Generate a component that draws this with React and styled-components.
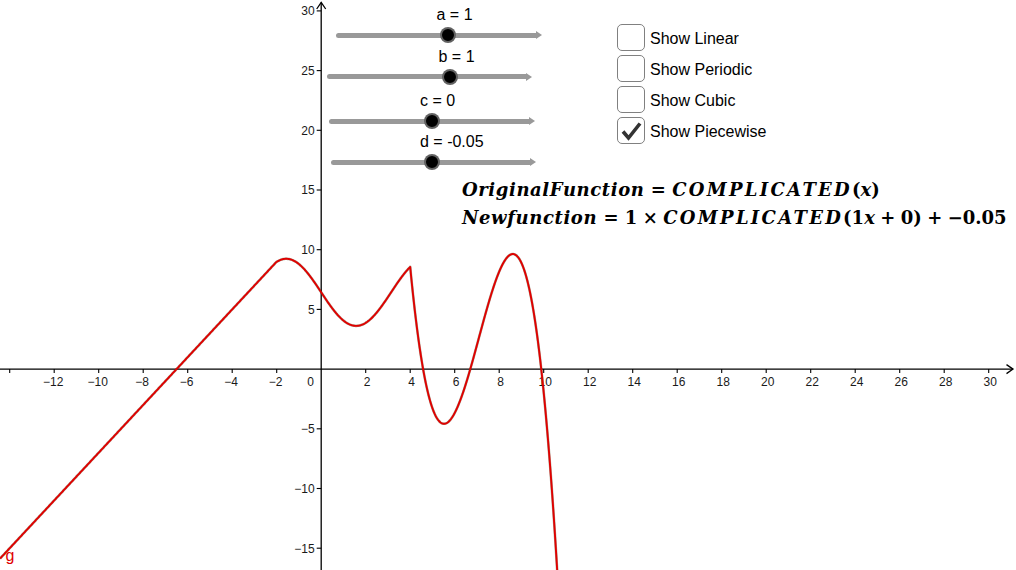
import React from 'react';
import styled, { createGlobalStyle } from 'styled-components';

const Global = createGlobalStyle`
  html, body { margin: 0; padding: 0; background: #fff; }
  body { font-family: "Liberation Sans", Arial, sans-serif; }
`;

const OX = 321.2;
const OY = 369.1;
const SX = 22.25;
const SY = 11.94;
const px = (X) => OX + X * SX;
const py = (Y) => OY - Y * SY;

const f = (X) => {
  if (X < -2) return 2 * X + 13;
  if (X < 4) return 6.43 - 2.81 * Math.sin(X);
  return -(X - 4.58) * (X - 6.7) * (X - 9.89) * (0.928 + 0.0109 * (X - 4));
};

const buildCurve = () => {
  const xs = [];
  for (let p = 0; p <= 1016; p += 0.5) xs.push((p - OX) / SX);
  xs.push(-2, 4 - 1e-6, 4);
  xs.sort((a, b) => a - b);
  const pts = [];
  for (const X of xs) {
    const Y = py(f(X));
    pts.push([px(X), Y]);
    if (Y > 640) break;
  }
  return 'M' + pts.map(([a, b]) => `${a.toFixed(2)} ${b.toFixed(2)}`).join(' L');
};

const curvePath = buildCurve();

const minus = (n) => (n < 0 ? '\u2212' + Math.abs(n) : String(n));

const xTicks = [];
for (let v = -14; v <= 30; v += 2) if (v !== 0) xTicks.push(v);
const yTicks = [];
for (let v = -15; v <= 30; v += 5) if (v !== 0) yTicks.push(v);

const Applet = styled.div`
  position: relative;
  width: 1016px;
  height: 570px;
  overflow: hidden;
  background: #fff;
`;

const Graph = styled.svg`
  display: block;
  width: 1016px;
  height: 570px;
`;

const AxisLabel = styled.text`
  font-family: "Liberation Sans", Arial, sans-serif;
  font-size: 12px;
  fill: #1a1a1a;
`;

const CurveLabel = styled.text`
  font-family: "Liberation Sans", Arial, sans-serif;
  font-size: 16px;
  fill: #e00000;
`;

/* ---------- sliders ---------- */
const SliderBox = styled.div`
  position: absolute;
  left: ${(p) => p.$left}px;
  top: ${(p) => p.$top}px;
  width: ${(p) => p.$width}px;
  display: flex;
  flex-direction: column;
`;

const SliderLabel = styled.div`
  font: 16px/18px "Liberation Sans", Arial, sans-serif;
  color: #000;
  white-space: nowrap;
  padding-left: ${(p) => p.$indent}px;
  margin-bottom: 8.5px;
`;

const Track = styled.div`
  position: relative;
  height: 5px;
  background: #999;
  border-radius: 2.5px;
  &::after {
    content: '';
    position: absolute;
    right: -4px;
    top: -1.5px;
    border-left: 6px solid #999;
    border-top: 4px solid transparent;
    border-bottom: 4px solid transparent;
  }
`;

const Knob = styled.span`
  position: absolute;
  left: ${(p) => p.$at - 8}px;
  top: -5.5px;
  width: 16px;
  height: 16px;
  box-sizing: border-box;
  border-radius: 50%;
  background: #000;
  border: 2.5px solid rgba(115, 115, 115, 0.85);
`;

const Slider = ({ name, value, left, width, y, knob }) => (
  <SliderBox $left={left} $top={y - 29} $width={width}>
    <SliderLabel $indent={knob - 11.5}>
      {name} = {value}
    </SliderLabel>
    <Track>
      <Knob $at={knob} />
    </Track>
  </SliderBox>
);

/* ---------- checkboxes ---------- */
const CheckList = styled.div`
  position: absolute;
  left: 617px;
  top: 24px;
  display: flex;
  flex-direction: column;
  gap: 4px;
`;

const CheckRow = styled.div`
  display: flex;
  align-items: center;
  gap: 5px;
  height: 27px;
  font: 16px/18px "Liberation Sans", Arial, sans-serif;
  color: #000;
  white-space: nowrap;
`;

const Box = styled.span`
  width: 28px;
  height: 27px;
  box-sizing: border-box;
  border: 1.5px solid #808080;
  border-radius: 5px;
  background: #fff;
  display: flex;
  align-items: center;
  justify-content: center;
  flex: none;
`;

const CheckText = styled.span`
  padding-top: 2px;
`;

const Check = ({ label, checked }) => (
  <CheckRow>
    <Box>
      {checked && (
        <svg width="25" height="24" viewBox="0 0 25 24">
          <path d="M4 12.5 L9.5 19 L21 4.5" fill="none" stroke="#333" strokeWidth="3.6" strokeLinejoin="miter" />
        </svg>
      )}
    </Box>
    <CheckText>{label}</CheckText>
  </CheckRow>
);

/* ---------- formula text ---------- */
const Formula = styled.div`
  position: absolute;
  left: 462px;
  top: 176px;
  display: flex;
  flex-direction: column;
  font-family: "DejaVu Serif", "Liberation Serif", serif;
  font-weight: bold;
  font-size: 18px;
  line-height: 28px;
  color: #000;
  white-space: nowrap;
`;

const MathLine = styled.div``;

const V = styled.span`
  font-style: italic;
  letter-spacing: ${(p) => p.$ls ?? 0}px;
`;

const Rel = styled.span`
  margin: 0 0.35em;
`;

const Bin = styled.span`
  margin: 0 0.3em;
`;

export default function App() {
  return (
    <>
      <Global />
      <Applet>
        <Graph viewBox="0 0 1016 570">
          {/* axes */}
          <line x1="0" y1={OY} x2="1013" y2={OY} stroke="#000" strokeWidth="1.3" />
          <path d={`M1006.5 ${OY - 4.5} L1013 ${OY} L1006.5 ${OY + 4.5}`} fill="none" stroke="#000" strokeWidth="1.3" />
          <line x1={OX} y1="2.5" x2={OX} y2="570" stroke="#000" strokeWidth="1.3" />
          <path d={`M${OX - 4.5} 9 L${OX} 2.5 L${OX + 4.5} 9`} fill="none" stroke="#000" strokeWidth="1.3" />

          {xTicks.map((v) => (
            <g key={'x' + v}>
              <line x1={px(v)} y1={OY} x2={px(v)} y2={OY + 4} stroke="#000" strokeWidth="1.1" />
              {v > -14 && (
                <AxisLabel x={px(v) + (v < 0 ? -1 : 1.5)} y={OY + 16.5} textAnchor="middle">
                  {minus(v)}
                </AxisLabel>
              )}
            </g>
          ))}
          <AxisLabel x="310.5" y={OY + 16.5} textAnchor="middle">0</AxisLabel>

          {yTicks.map((v) => (
            <g key={'y' + v}>
              <line x1={OX - 4.5} y1={py(v)} x2={OX} y2={py(v)} stroke="#000" strokeWidth="1.1" />
              <AxisLabel x={OX - 6.5} y={py(v) + 4.3} textAnchor="end">
                {minus(v)}
              </AxisLabel>
            </g>
          ))}

          {/* function */}
          <path d={curvePath} fill="none" stroke="#3a2a00" strokeOpacity="0.4" strokeWidth="2.6" strokeLinejoin="round" />
          <path d={curvePath} fill="none" stroke="#e00000" strokeWidth="1.9" strokeLinejoin="round" />
          <CurveLabel x="5.5" y="561">g</CurveLabel>
        </Graph>

        <Slider name="a" value="1" left={336} width={202} y={35} knob={112} />
        <Slider name="b" value="1" left={327} width={201} y={76.5} knob={123} />
        <Slider name="c" value="0" left={329} width={202} y={121} knob={102.5} />
        <Slider name="d" value="-0.05" left={331} width={201} y={162.3} knob={100.5} />

        <CheckList>
          <Check label="Show Linear" />
          <Check label="Show Periodic" />
          <Check label="Show Cubic" />
          <Check label="Show Piecewise" checked />
        </CheckList>

        <Formula>
          <MathLine>
            <V $ls={0.6}>OriginalFunction</V>
            <Rel>=</Rel>
            <V $ls={2.3}>COMPLICATED</V>(<V>x</V>)
          </MathLine>
          <MathLine>
            <V $ls={0.6}>Newfunction</V>
            <Rel>=</Rel>1<Bin>×</Bin>
            <V $ls={2.3}>COMPLICATED</V>(1<V>x</V>
            <Bin>+</Bin>0)<Bin>+</Bin>−0.05
          </MathLine>
        </Formula>
      </Applet>
    </>
  );
}
